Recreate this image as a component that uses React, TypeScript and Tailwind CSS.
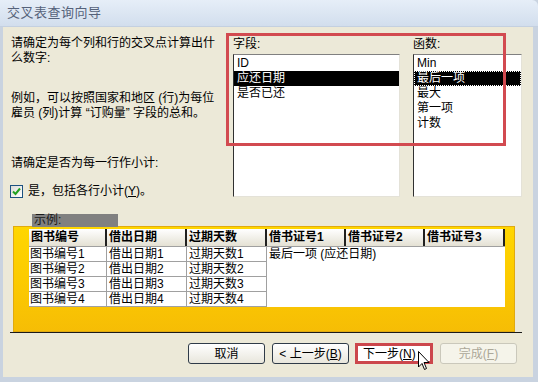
import React from "react";

const font = { fontFamily: '"Liberation Sans", "Noto Sans CJK SC", sans-serif' };

const fields = ["ID", "应还日期", "是否已还"];
const funcs = ["Min", "最后一项", "最大", "第一项", "计数"];
const headers = ["图书编号", "借出日期", "过期天数", "借书证号1", "借书证号2", "借书证号3"];
const colW = ["w-[78px]", "w-[80px]", "w-[80px]", "w-[79px]", "w-[79px]", "w-[80px]"];

const ListBox = ({ items, selected, focus, width }: { items: string[]; selected: number; focus?: boolean; width: string }) => (
  <div className={`${width} h-[143px] bg-white border border-t-[#808080] border-l-[#303030] border-r-[#e4e2d8] border-b-[#e4e2d8] pt-[1px]`}>
    {items.map((it, i) => (
      <div
        key={it}
        className={`h-[15px] leading-[15px] px-[3px] whitespace-nowrap ${
          i === selected ? "bg-black text-white" : "text-black"
        } ${i === selected && focus ? "outline-1 outline-dotted outline-white -outline-offset-1" : ""}`}
      >
        {it}
      </div>
    ))}
  </div>
);

const Button = ({ children, disabled }: { children: React.ReactNode; disabled?: boolean }) => (
  <div
    className={`w-[77px] h-[21px] rounded-[3px] border flex items-center justify-center text-[12px] ${
      disabled
        ? "border-[#cac8bb] bg-[#f5f4ea] text-[#aca899]"
        : "border-[#2f3b48] bg-gradient-to-b from-white to-[#e8e6dc] text-black"
    }`}
  >
    {children}
  </div>
);

export default function App() {
  return (
    <div style={font} className="relative w-[538px] h-[382px] flex flex-col bg-[#c9d3e0] text-[12px] text-black overflow-hidden">
      {/* title bar */}
      <div className="h-[27px] shrink-0 flex items-center pl-[7px] bg-gradient-to-b from-[#e6eef8] to-[#d2deed] rounded-tr-[6px] border-b border-[#c4d0e0]">
        <span className="text-[13px] text-[#55627a] tracking-[0.5px]">交叉表查询向导</span>
      </div>

      <div className="flex-1 flex flex-col ml-[3px] mr-[5px] mb-[5px] bg-[#ece9d8]">
        {/* top part */}
        <div className="h-[187px] shrink-0 flex pt-[9px] pl-[8px]">
          <div className="w-[222px] leading-[15px]">
            <div>
              请确定为每个列和行的交叉点计算出什
              <br />
              么数字:
            </div>
            <div className="mt-[25px]">
              例如，可以按照国家和地区 (行)为每位
              <br />
              雇员 (列)计算 “订购量” 字段的总和。
            </div>
            <div className="mt-[35px]">请确定是否为每一行作小计:</div>
            <div className="mt-[13px] flex items-center gap-[5px] -ml-[1px]">
              <div className="w-[13px] h-[13px] border border-[#1c5180] bg-gradient-to-br from-[#dcdcd7] to-white flex items-center justify-center">
                <svg width="9" height="9" viewBox="0 0 9 9">
                  <path d="M1 4.5 L3.5 7 L8 1.5" fill="none" stroke="#21a121" strokeWidth="2" />
                </svg>
              </div>
              <span>
                是，包括各行小计(<span className="underline">Y</span>)。
              </span>
            </div>
          </div>
          <div className="flex flex-col">
            <div className="h-[15px] leading-[15px] mt-[1px]">字段:</div>
            <div className="mt-[2px]">
              <ListBox items={fields} selected={1} width="w-[167px]" />
            </div>
          </div>
          <div className="flex flex-col ml-[13px]">
            <div className="h-[15px] leading-[15px] mt-[1px]">函数:</div>
            <div className="mt-[2px]">
              <ListBox items={funcs} selected={1} focus width="w-[109px]" />
            </div>
          </div>
        </div>

        {/* sample */}
        <div className="ml-[29px] w-[86px] h-[13px] leading-[13px] bg-[#808080] text-[#1a1a1a] pl-[2px] relative z-10">示例:</div>
        <div className="ml-[10px] w-[502px] h-[106px] -mt-[1px] border border-[#e0aa10] bg-gradient-to-b from-[#ffd600] via-[#fccb00] to-[#f6bd05] pt-[2px] pl-[15px]">
          <div className="w-[476px] bg-white">
            <div className="flex h-[18px] bg-gradient-to-b from-white to-[#e4e1d4] border-b border-[#a0a0a0]">
              {headers.map((h, i) => (
                <div key={h} className={`${colW[i]} border-r-2 border-[#202020] px-[2px] font-bold leading-[17px] whitespace-nowrap`}>
                  {h}
                </div>
              ))}
            </div>
            <div className="flex">
              <div className="flex flex-col">
                {[1, 2, 3, 4].map((n) => (
                  <div key={n} className="flex h-[15px] border-b border-[#a0a0a0] leading-[14px]">
                    <div className="w-[78px] border-r border-[#a0a0a0] px-[1px]">图书编号{n}</div>
                    <div className="w-[80px] border-r border-[#a0a0a0] px-[2px]">借出日期{n}</div>
                    <div className="w-[80px] border-r border-[#a0a0a0] px-[2px]">过期天数{n}</div>
                  </div>
                ))}
              </div>
              <div className="flex-1 h-[60px] px-[2px] leading-[15px]">最后一项 (应还日期)</div>
            </div>
          </div>
        </div>
        <div className="ml-[7px] w-[512px] h-px bg-[#1a1a1a]" />

        {/* buttons */}
        <div className="mt-[10px] ml-[185px] flex gap-[7px]">
          <Button>取消</Button>
          <Button>
            &lt; 上一步(<span className="underline">B</span>)
          </Button>
          <div className="w-[78px] h-[21px] -ml-[1px] border-[3px] border-[#cc474c] bg-white flex items-center pl-[5px] text-[12px]">
            下一步(<span className="underline">N</span>)
          </div>
          <Button disabled>
            完成(<span className="underline">F</span>)
          </Button>
        </div>
      </div>

      {/* red annotation box */}
      <div className="absolute left-[226px] top-[33px] w-[280px] h-[113px] border-[3px] border-[#d24a50] pointer-events-none" />

      {/* mouse cursor */}
      <svg className="absolute left-[418px] top-[351px]" width="12" height="20" viewBox="0 0 12 20">
        <path d="M0.5 0.5 L0.5 16 L4 12.5 L6.5 18.5 L8.5 17.5 L6 11.5 L11 11.5 Z" fill="white" stroke="black" strokeWidth="1" />
      </svg>
    </div>
  );
}
